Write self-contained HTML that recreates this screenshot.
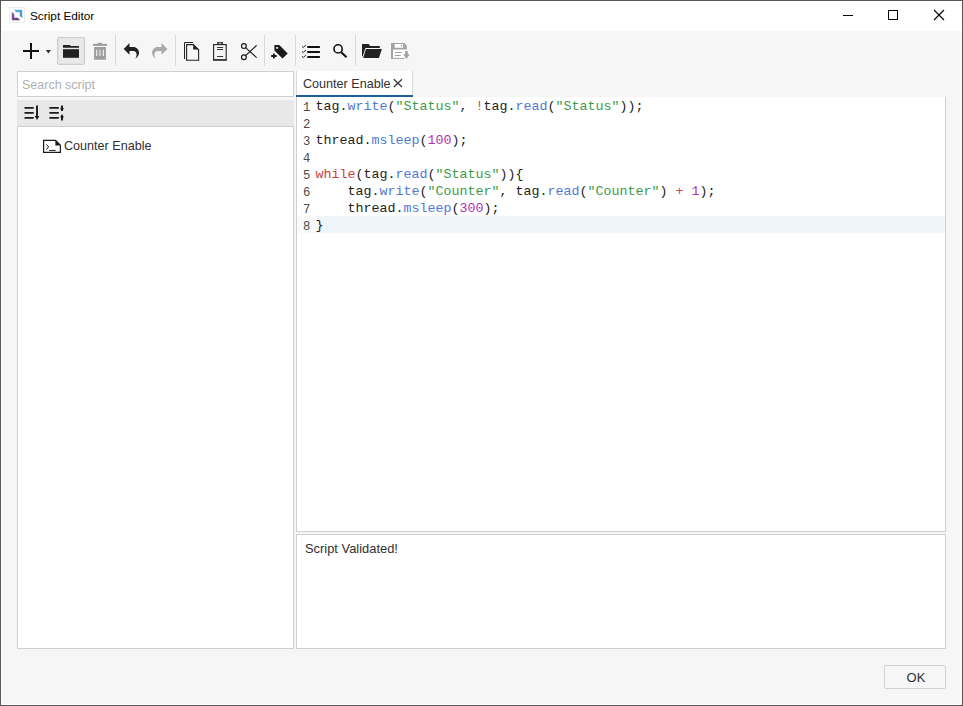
<!DOCTYPE html>
<html><head><meta charset="utf-8">
<style>
html,body{margin:0;padding:0;}
body{width:963px;height:706px;overflow:hidden;position:relative;background:#fff;font-family:"Liberation Sans",sans-serif;}
.a{position:absolute;}
#win{left:0;top:0;width:963px;height:706px;box-sizing:border-box;border:1px solid #575757;background:#fff;}
#body{left:2px;top:31px;width:959px;height:673px;background:#f6f6f6;}
.sep{position:absolute;top:35px;width:1px;height:31px;background:#d9d9d9;}
svg{position:absolute;overflow:visible;}
.txt{position:absolute;white-space:pre;color:#303030;}
#code{left:297px;top:97px;width:648px;height:434px;background:#fff;}
.ln{position:absolute;left:6px;width:8px;margin-top:0.6px;font-size:12.2px;color:#4a4a4a;}
.cl{position:absolute;left:18.5px;margin-top:-1px;color:#1e1e1e;}
.code{font-family:"Liberation Mono",monospace;font-size:13.33px;line-height:17px;white-space:pre;}
.k{color:#c8423b}.m{color:#4f79d3}.s{color:#389c4a}.n{color:#b030b0}.o{color:#d24a4a}
</style></head><body>
<div id="win" class="a"></div>
<div id="body" class="a"></div>

<!-- title bar -->
<div class="a" style="left:9px;top:7px;width:14px;height:14px;border:1px solid #ebebeb;background:#fff;"></div>
<svg style="left:0;top:0" width="40" height="30">
  <defs><linearGradient id="gb" x1="0" y1="0" x2="1" y2="1"><stop offset="0" stop-color="#62c0e0"/><stop offset="1" stop-color="#3a8ccc"/></linearGradient>
  <linearGradient id="gp" x1="0" y1="0" x2="1" y2="1"><stop offset="0" stop-color="#8a5aa8"/><stop offset="1" stop-color="#56357e"/></linearGradient></defs>
  <path d="M13.8 9.8 H22.2 V18.2 L19.7 15.7 V12.3 H16.3 Z" fill="url(#gb)"/>
  <path d="M11.8 11.8 L14.3 14.3 V17.7 H17.7 L20.2 20.2 H11.8 Z" fill="url(#gp)"/>
</svg>
<div class="txt" style="left:30px;top:8px;font-size:11.8px;line-height:16px;color:#000;">Script Editor</div>

<!-- window controls -->
<svg style="left:0;top:0" width="963" height="30">
  <line x1="843" y1="15.5" x2="853" y2="15.5" stroke="#000" stroke-width="1"/>
  <rect x="888.5" y="10.5" width="9" height="9" fill="none" stroke="#000" stroke-width="1"/>
  <path d="M934 10 L944 20 M944 10 L934 20" stroke="#000" stroke-width="1.1"/>
</svg>

<!-- toolbar -->
<div class="a" style="left:57px;top:37px;width:26px;height:26px;border:1px solid #cfcfcf;border-radius:2px;background:#e9e9e9;box-shadow:inset 0 0 0 1px #e1e1e1;"></div>
<div class="sep" style="left:115px"></div>
<div class="sep" style="left:175px"></div>
<div class="sep" style="left:264px"></div>
<div class="sep" style="left:295px"></div>
<div class="sep" style="left:355px"></div>
<svg style="left:0;top:0" width="963" height="70">
  <!-- plus -->
  <path d="M23 51 H39 M31 43 V59" stroke="#111" stroke-width="2" fill="none"/>
  <path d="M45.8 50 H51 L48.4 53.6 Z" fill="#333"/>
  <!-- folder -->
  <path d="M63 45 H69.8 L71 46 H79 V47.7 H63 Z" fill="#222"/>
  <rect x="63" y="49.2" width="16" height="8.6" fill="#222"/>
  <!-- trash -->
  <g fill="#9e9e9e">
    <rect x="93" y="43.9" width="14" height="2"/>
    <rect x="97.7" y="42.8" width="4.3" height="1.5"/>
    <path d="M94.1 46.9 H105.9 V59.8 H94.1 Z M96.2 49.7 V56 H97.3 V49.7 Z M99.5 49.7 V56 H100.5 V49.7 Z M102.8 49.7 V56 H103.9 V49.7 Z" fill-rule="evenodd"/>
  </g>
  <!-- undo -->
  <path id="undo" d="M129.5 43 L123.7 48.9 L129.5 54.7 L129.5 51 L133.3 51 C135.3 51 136.6 52.4 136.6 54.4 C136.6 56 136.1 57.4 135.3 58.7 C137.6 57.2 139 55.2 139 52.8 C139 49.5 136.5 47 133.2 47 L129.5 47 Z" fill="#222"/>
  <!-- redo -->
  <g transform="translate(291.1 0) scale(-1 1)"><path d="M129.5 43 L123.7 48.9 L129.5 54.7 L129.5 51 L133.3 51 C135.3 51 136.6 52.4 136.6 54.4 C136.6 56 136.1 57.4 135.3 58.7 C137.6 57.2 139 55.2 139 52.8 C139 49.5 136.5 47 133.2 47 L129.5 47 Z" fill="#a9a9a9"/></g>
  <!-- copy -->
  <path d="M184.5 59 V42.5 H193" stroke="#222" stroke-width="1" fill="none"/>
  <path d="M186.6 44.6 H193.4 L198.6 49.8 V60.2 H186.6 Z" stroke="#222" stroke-width="1.1" fill="none"/>
  <path d="M193.2 44.4 V49.6 H198.8 Z" fill="#222"/>
  <!-- clipboard -->
  <rect x="213.6" y="44.6" width="12.6" height="15.4" stroke="#222" stroke-width="1.1" fill="none"/>
  <rect x="213.1" y="59.1" width="13.6" height="1.5" fill="#333"/>
  <path d="M217.3 42 H222.9 V44.6 H217.3 Z M218.6 42.8 V43.8 H221.6 V42.8 Z" fill="#222" fill-rule="evenodd"/>
  <path d="M217 47.5 H223.2 M217 49.5 H223.2 M217 56.5 H223.2" stroke="#222" stroke-width="0.9"/>
  <!-- scissors -->
  <circle cx="243.9" cy="46.1" r="2.4" stroke="#1a1a1a" stroke-width="1.2" fill="none"/>
  <circle cx="243.9" cy="57.2" r="2.4" stroke="#1a1a1a" stroke-width="1.2" fill="none"/>
  <path d="M245.8 47.9 L256.6 57.6 M245.8 55.4 L256.6 45.4" stroke="#1a1a1a" stroke-width="1.2" fill="none"/>
  <!-- tag plus -->
  <path d="M274.4 45 H279.3 L287.7 53.4 L282.5 58.6 L274.4 50.4 Z M276.1 47 V48.8 H277.9 V47 Z" fill="#1a1a1a" fill-rule="evenodd"/>
  <path d="M271.2 56 H276.7 M273.9 53.4 V58.6" stroke="#1a1a1a" stroke-width="1.8"/>
  <!-- checklist -->
  <path d="M307.3 46.9 H319.9 M307.3 51.9 H319.9 M307.3 57 H319.9" stroke="#111" stroke-width="2"/>
  <path d="M302 46.3 L303.3 47.5 L305.9 45 M302 51.3 L303.3 52.5 L305.9 50 M302 56.3 L303.3 57.5 L305.9 55" stroke="#222" stroke-width="1" fill="none"/>
  <!-- search -->
  <circle cx="338.1" cy="48.9" r="4.1" stroke="#111" stroke-width="1.6" fill="none"/>
  <path d="M341.2 52.2 L346.5 57.3" stroke="#111" stroke-width="2"/>
  <!-- open folder -->
  <path d="M362 44 H368.7 L370.2 46.1 H379.8 V48 H366 L362.8 56.5 H362 Z" fill="#222"/>
  <path d="M365.3 48.3 H382.6 L379.4 58.6 H362.2 Z" fill="#fafafa"/>
  <path d="M365.9 49.1 H381.9 L378.9 57.9 H363.2 Z" fill="#222"/>
  <!-- save -->
  <rect x="393" y="49" width="12" height="9" fill="#fff"/>
  <rect x="394.5" y="43.8" width="8.7" height="4.2" fill="#fff"/>
  <g fill="#a3a3a3">
    <path d="M391 43 H404.2 L406.9 45.7 V49.4 H391 Z M394.7 44 V47.8 H403 V44 Z" fill-rule="evenodd"/>
    <rect x="391" y="43" width="2" height="15.9"/>
    <rect x="391" y="57.9" width="13.4" height="1"/>
    <rect x="400.9" y="44.8" width="1.1" height="1.9"/>
    <rect x="395" y="52" width="6.9" height="1"/>
    <rect x="395" y="55" width="5.8" height="1"/>
    <path d="M405.1 51 H407.8 V54.2 H409.8 L406.5 58.9 L403.1 54.2 H405.1 Z" stroke="#fff" stroke-width="0.8" paint-order="stroke"/>
  </g>
</svg>

<!-- left panel -->
<div class="a" style="left:17px;top:71px;width:275px;height:24px;border:1px solid #cfcfcf;background:#fff;"></div>
<div class="txt" style="left:22px;top:78px;font-size:12.5px;line-height:14px;color:#b0b0b0;">Search script</div>

<div class="a" style="left:17px;top:97px;width:277px;height:3px;background:#f9f9f9;"></div>
<div class="a" style="left:17px;top:126px;width:275px;height:521px;border:1px solid #cfcfcf;background:#fff;"></div>
<div class="a" style="left:17px;top:100px;width:277px;height:26px;background:#e8e8e8;border-bottom:1px solid #cfcfcf;"></div>

<div class="txt" style="left:64px;top:139px;font-size:12.6px;line-height:14px;">Counter Enable</div>

<!-- tab -->
<div class="a" style="left:296px;top:71px;width:115px;height:24px;border-left:1px solid #dadada;border-right:1px solid #dadada;background:#fff;"></div>
<div class="txt" style="left:303px;top:77px;font-size:12.6px;line-height:14px;">Counter Enable</div>
<div class="a" style="left:296px;top:95px;width:117px;height:2px;background:#1d5f9b;"></div>


<svg style="left:0;top:0" width="420" height="160">
  <!-- tab close -->
  <path d="M393.8 79.3 L402 87 M402 79.3 L393.8 87" stroke="#333" stroke-width="1.2" fill="none"/>
  <!-- sort icon 1 -->
  <path d="M24.5 107.9 H33.7 M24.5 112.9 H33.7 M24.5 117.9 H33.7" stroke="#1a1a1a" stroke-width="1.9" fill="none"/>
  <path d="M37 105.4 V117" stroke="#1a1a1a" stroke-width="1.9"/>
  <path d="M34.7 116 H39.3 L37 120 Z" fill="#1a1a1a"/>
  <!-- sort icon 2 -->
  <path d="M49.4 107.9 H58.8 M49.4 112.9 H58.8 M49.4 117.9 H58.8" stroke="#1a1a1a" stroke-width="1.9" fill="none"/>
  <path d="M62 106.8 L63.9 108.7 L62 110.6 L60.1 108.7 Z M62 115.2 L63.9 117.1 L62 119 L60.1 117.1 Z" fill="#1a1a1a"/>
  <path d="M62 105.4 V111 M62 114.8 V120.6" stroke="#1a1a1a" stroke-width="1.9"/>
  <!-- tree item icon -->
  <path d="M43.6 140.4 H55.6 L60.4 145.2 V152.4 H43.6 Z" stroke="#1a1a1a" stroke-width="1.2" fill="#fff"/>
  <path d="M55.4 140.3 V145.4 H60.6 Z" fill="#1a1a1a"/>
  <path d="M46.4 144.4 L48.6 146.9 L46.4 149.6" stroke="#1a1a1a" stroke-width="1" fill="none"/>
  <path d="M49.2 150.4 H55.7" stroke="#1a1a1a" stroke-width="1"/>
</svg>
<!-- editor -->
<div class="a" style="left:296px;top:97px;width:648px;height:434px;border:1px solid #d0d0d0;border-top:none;background:#fff;"></div>
<div class="a" style="left:297px;top:216px;width:20px;height:17px;background:#f8fafc;"></div>
<div class="a" style="left:317px;top:216px;width:628px;height:17px;background:#eff5f8;"></div>
<div class="a code" style="left:297px;top:99px;">
<div class="ln" style="top:0px">1</div><div class="cl" style="top:0px"><span>tag.</span><span class="m">write</span>(<span class="s">"Status"</span>, <span class="o">!</span>tag.<span class="m">read</span>(<span class="s">"Status"</span>));</div>
<div class="ln" style="top:17px">2</div><div class="cl" style="top:17px"></div>
<div class="ln" style="top:34px">3</div><div class="cl" style="top:34px">thread.<span class="m">msleep</span>(<span class="n">100</span>);</div>
<div class="ln" style="top:51px">4</div><div class="cl" style="top:51px"></div>
<div class="ln" style="top:68px">5</div><div class="cl" style="top:68px"><span class="k">while</span>(tag.<span class="m">read</span>(<span class="s">"Status"</span>)){</div>
<div class="ln" style="top:85px">6</div><div class="cl" style="top:85px">    tag.<span class="m">write</span>(<span class="s">"Counter"</span>, tag.<span class="m">read</span>(<span class="s">"Counter"</span>) <span class="o">+</span> <span class="n">1</span>);</div>
<div class="ln" style="top:102px">7</div><div class="cl" style="top:102px">    thread.<span class="m">msleep</span>(<span class="n">300</span>);</div>
<div class="ln" style="top:119px">8</div><div class="cl" style="top:119px">}</div>
</div>

<!-- output -->
<div class="a" style="left:296px;top:534px;width:648px;height:113px;border:1px solid #d0d0d0;background:#fff;"></div>
<div class="txt" style="left:305px;top:542px;font-size:12.9px;line-height:14px;">Script Validated!</div>

<!-- OK button -->
<div class="a" style="left:884px;top:665px;width:60px;height:22px;border:1px solid #d2d2d2;border-radius:2px;background:#f7f7f7;"></div>
<div class="txt" style="left:885px;top:671px;width:62px;text-align:center;font-size:13px;line-height:14px;">OK</div>

</body></html>
